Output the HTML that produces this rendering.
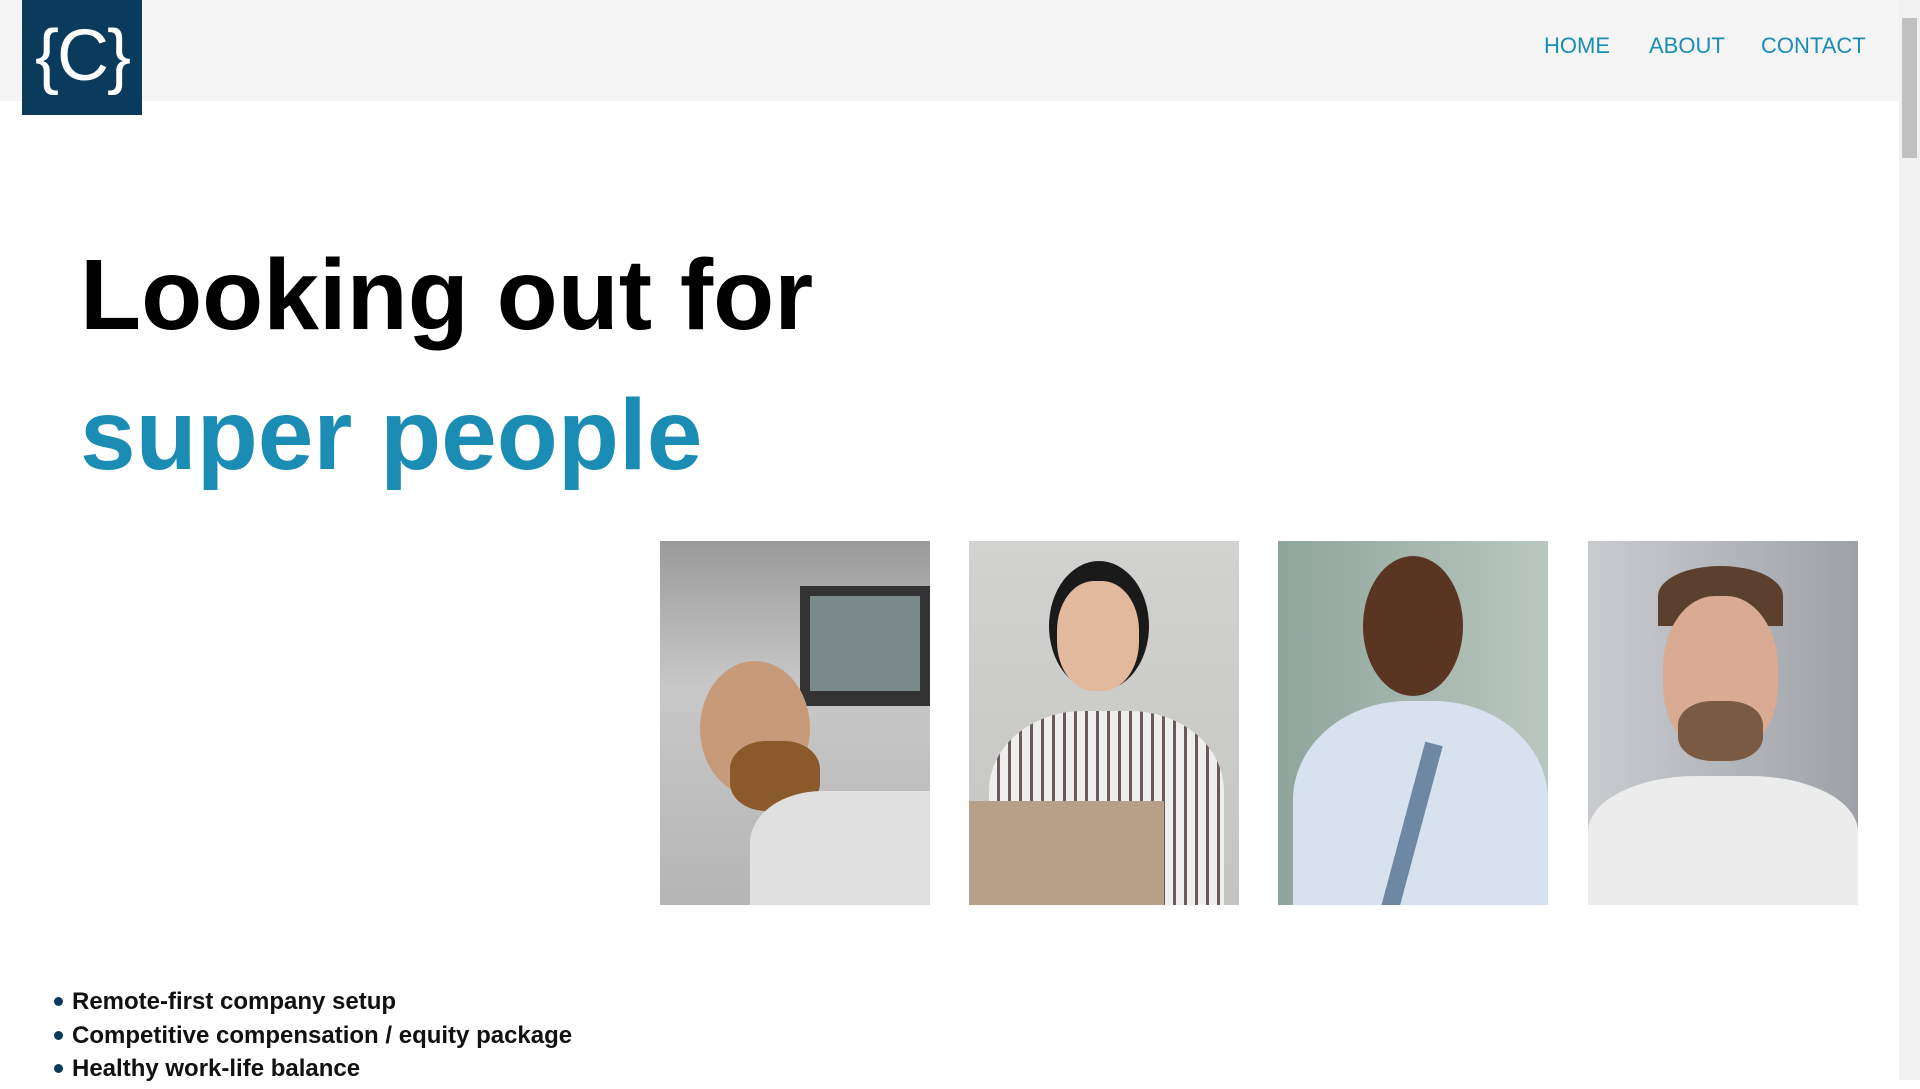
<!DOCTYPE html>
<html><head><meta charset="utf-8"><style>
*{margin:0;padding:0;box-sizing:border-box}
body{width:1920px;height:1080px;overflow:hidden;background:#fff;font-family:"Liberation Sans",sans-serif;position:relative}
.hdr{position:absolute;left:0;top:0;width:1899px;height:101px;background:#f5f5f5}
.logo{position:absolute;left:22px;top:0;width:120px;height:115px;background:#0a3a5c;color:#fff;font-size:72px;text-align:center;line-height:112px;letter-spacing:-2px}
.nav a{position:absolute;top:33px;color:#1b8db5;font-size:22px;text-decoration:none}
h1{position:absolute;left:80px;font-weight:bold;font-size:100px;letter-spacing:0;white-space:nowrap}
.ph{position:absolute;top:541px;width:270px;height:364px;overflow:hidden}
ul{position:absolute;left:54px;top:988px;list-style:none;font-weight:bold;font-size:24px;color:#111}
ul li{height:33.5px}
ul li:before{content:"";display:inline-block;width:9px;height:9px;border-radius:50%;background:#0a3a5c;margin-right:9px;vertical-align:3px}
.sb{position:absolute;right:0;top:0;width:21px;height:1080px;background:#f1f1f1}
.th{position:absolute;right:3px;top:18px;width:15px;height:140px;background:#c1c1c1}
</style></head><body>
<div class="hdr"></div>
<div class="logo">{C}</div>
<div class="nav"><a style="left:1544px">HOME</a><a style="left:1649px">ABOUT</a><a style="left:1761px">CONTACT</a></div>
<h1 style="top:238px;color:#000">Looking out for</h1>
<h1 style="top:378px;color:#1b8db5">super people</h1>

<div class="ph" style="left:660px;background:linear-gradient(#9a9a9a,#c8c8c8 40%,#b5b5b5)">
<div style="position:absolute;left:140px;top:45px;width:130px;height:120px;background:#333"></div>
<div style="position:absolute;left:150px;top:55px;width:110px;height:95px;background:#7a8a8a"></div>
<div style="position:absolute;left:40px;top:120px;width:110px;height:135px;border-radius:50%;background:#c79a7a"></div>
<div style="position:absolute;left:70px;top:200px;width:90px;height:70px;border-radius:40%;background:#8b5a2b"></div>
<div style="position:absolute;left:90px;top:250px;width:180px;height:130px;border-radius:40% 0 0 0;background:#e0e0e0"></div>
</div>
<div class="ph" style="left:969px;background:linear-gradient(#d2d2d0,#c4c4c2)">
<div style="position:absolute;left:80px;top:20px;width:100px;height:130px;border-radius:50%;background:#1a1a1a"></div>
<div style="position:absolute;left:88px;top:40px;width:82px;height:110px;border-radius:45%;background:#e2b99c"></div>
<div style="position:absolute;left:20px;top:170px;width:235px;height:200px;border-radius:40% 40% 0 0;background:repeating-linear-gradient(90deg,#eee 0 8px,#6a5a5a 8px 11px)"></div>
<div style="position:absolute;left:0;top:260px;width:195px;height:110px;background:#b89f8a"></div>
</div>
<div class="ph" style="left:1278px;background:linear-gradient(90deg,#8fa59c,#b9c7c0)">
<div style="position:absolute;left:85px;top:15px;width:100px;height:140px;border-radius:50%;background:#5a3522"></div>
<div style="position:absolute;left:15px;top:160px;width:255px;height:220px;border-radius:45% 45% 0 0;background:#d7e2ee"></div>
<div style="position:absolute;left:125px;top:200px;width:18px;height:170px;background:#6e87a3;transform:rotate(15deg)"></div>
</div>
<div class="ph" style="left:1588px;background:linear-gradient(90deg,#c9cbcf,#9ea2a7)">
<div style="position:absolute;left:70px;top:25px;width:125px;height:60px;border-radius:50% 50% 0 0;background:#5b412d"></div>
<div style="position:absolute;left:75px;top:55px;width:115px;height:160px;border-radius:45%;background:#d9ab92"></div>
<div style="position:absolute;left:90px;top:160px;width:85px;height:60px;border-radius:40%;background:#7a5a42"></div>
<div style="position:absolute;left:0;top:235px;width:270px;height:140px;border-radius:40% 40% 0 0;background:#ececec"></div>
</div>

<ul><li>Remote-first company setup</li><li>Competitive compensation / equity package</li><li>Healthy work-life balance</li></ul>
<div class="sb"><div class="th"></div></div>
</body></html>
